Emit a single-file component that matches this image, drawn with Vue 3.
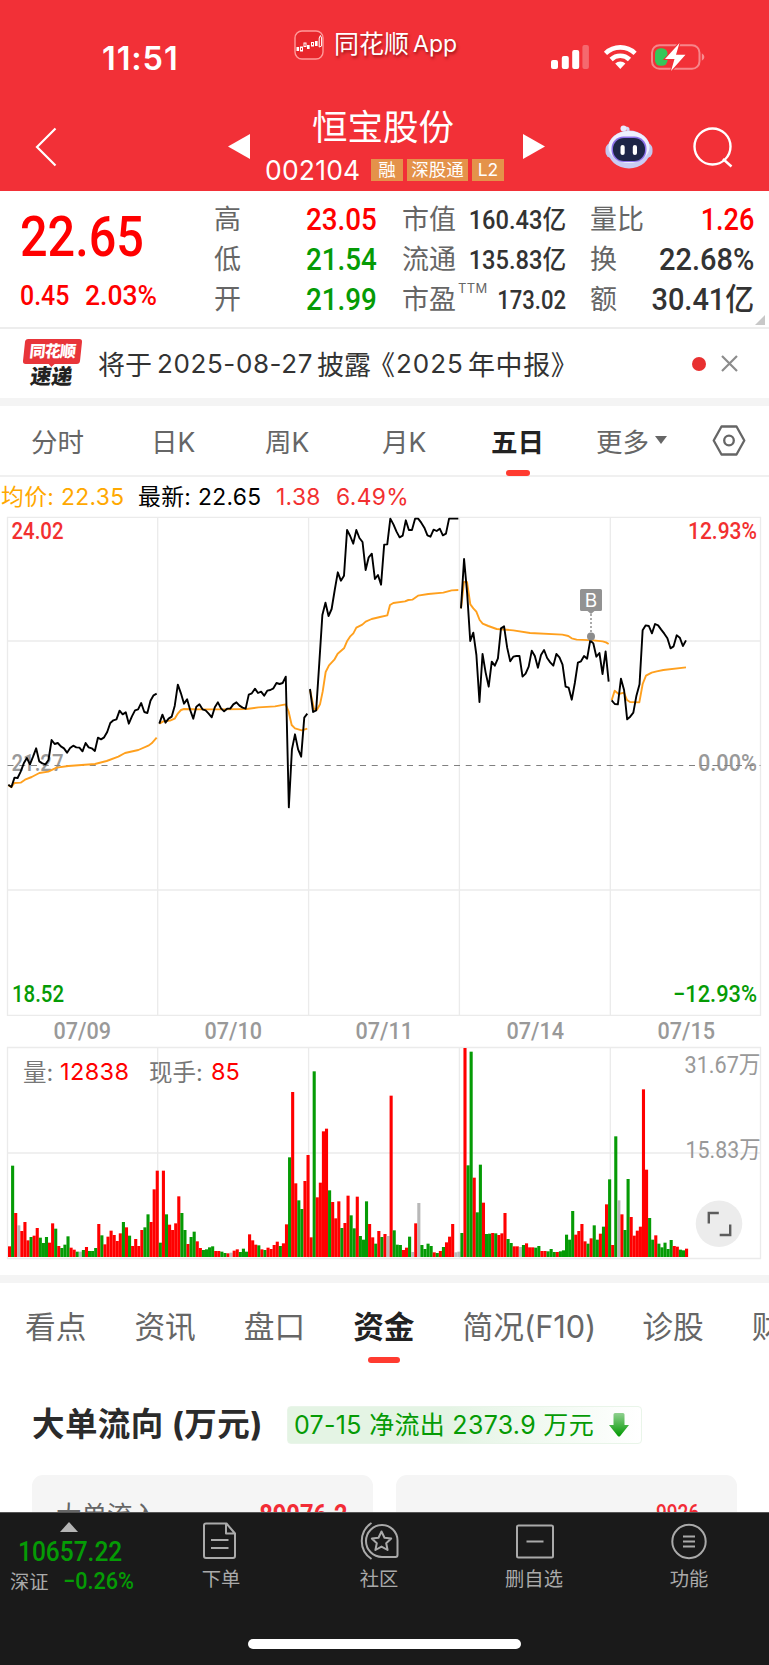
<script setup>
import { computed } from 'vue'

// left, middle and right quote columns
const quotes = [
  { label: '高', value: '23.05', tone: 'up' },
  { label: '低', value: '21.54', tone: 'down' },
  { label: '开', value: '21.99', tone: 'down' }
]
const caps = [
  { label: '市值', value: '160.43', unit: '亿' },
  { label: '流通', value: '135.83', unit: '亿' },
  { label: '市盈', sup: 'TTM', value: '173.02' }
]
const extras = [
  { label: '量比', value: '1.26', tone: 'up' },
  { label: '换', value: '22.68%' },
  { label: '额', value: '30.41', unit: '亿' }
]

const periods = ['分时', '日K', '周K', '月K', '五日', '更多']
const sections = ['看点', '资讯', '盘口', '资金', '简况(F10)', '诊股', '财']
const dates = ['07/09', '07/10', '07/11', '07/14', '07/15']

// one price per 5 minutes, chart units are a third of a pixel
const prices = [
  { x: 25, step: 9.27, y: [824, 831, 803, 804, 785, 760, 744, 763, 740, 715, 754, 760, 763, 750, 690, 702, 699, 709, 715, 728, 714, 707, 712, 713, 724, 699, 712, 715, 723, 683, 688, 682, 666, 639, 631, 628, 602, 613, 607, 641, 619, 601, 598, 579, 606, 609, 572, 556, 551] },
  { x: 478, step: 9.25, y: [641, 614, 638, 626, 620, 587, 524, 550, 581, 568, 600, 626, 590, 583, 598, 601, 611, 622, 592, 577, 595, 604, 596, 596, 583, 577, 587, 593, 596, 554, 550, 536, 549, 545, 557, 542, 540, 535, 519, 522, 519, 500, 892, 718, 673, 718, 740, 623, 611] },
  { x: 930, step: 9.27, y: [537, 606, 601, 460, 315, 278, 318, 297, 240, 187, 212, 197, 60, 78, 101, 60, 84, 96, 180, 142, 131, 207, 195, 224, 104, 103, 26, 43, 65, 82, 77, 31, 60, 60, 26, 26, 38, 53, 76, 80, 59, 63, 56, 76, 71, 26, 26, 26, 26] },
  { x: 1383, step: 9.23, y: [295, 147, 250, 393, 368, 435, 576, 432, 487, 530, 455, 467, 445, 355, 349, 413, 454, 440, 438, 438, 500, 491, 470, 422, 438, 473, 435, 420, 444, 457, 467, 432, 442, 464, 530, 533, 569, 519, 458, 454, 438, 446, 391, 400, 440, 429, 492, 424, 515] },
  { x: 1835, step: 9.29, y: [571, 582, 583, 506, 540, 628, 620, 608, 557, 523, 361, 346, 348, 370, 342, 346, 359, 371, 385, 415, 409, 376, 383, 408, 391] }
]

const averages = [
  '25,826 34,832 43,819 62,818 75,809 95,801 118,789 145,785 170,773 205,768 285,762 320,753 355,740 375,729 415,720 445,707 455,700 470,683',
  '478,641 490,634 510,632 524,626 534,610 543,600 552,597 600,598 660,598 740,597 775,592 825,589 857,583 866,605 875,645 885,655 905,661 922,656',
  '930,540 942,597 951,599 960,583 968,545 977,486 987,466 1003,449 1013,431 1032,415 1041,394 1050,380 1060,370 1069,353 1087,344 1097,335 1115,327 1140,321 1162,316 1170,285 1180,279 1215,274 1225,270 1237,269 1254,257 1285,252 1330,248 1355,241 1375,240',
  '1383,295 1392,216 1401,216 1411,283 1420,295 1429,305 1439,330 1448,341 1465,348 1490,357 1540,361 1590,369 1687,374 1705,378 1715,385 1730,389 1780,391 1808,394 1818,397 1826,402',
  '1835,571 1844,542 1856,552 1872,548 1881,570 1890,576 1918,577 1928,522 1938,497 1955,488 1970,484 1990,480 2058,472'
]

// r = up, g = down, w = flat, followed by the top edge of the bar
const volumes = `
r829 g587 r729 w766 r783 r756 r811 g801 r797 r774 g803 g819 g801 r818 r760 g776 r828 g834 g824 g799
r833 r839 g845 w845 g840 r831 g843 g843 g834 r762 g796 r823 r800 r782 r795 r813 r790 g756 r772 g797
r828 r807 r828 r780 g772 g733 r756 r658 r602
g818 r602 g733 r764 r780 r760 r679 g729 g780 r822 g801 g785 r814 r834 g840 g838 g832 g829 r843 r843
g845 g849 r850 w848 r842 r838 g846 g836 g845 r793 r811 r824 g826 r838 g840 r833 r837 r825 r815 g828
r820 r763 g562 r366 r640 g691 g717 r633 r555
r802 g304 r682 r638 r484 r476 g661 r696 r745 r694 g774 r759 r677 g736 g775 r680 g798 g809 g694 r762
r802 g821 r783 g801 r792 w798 r377 g781 g824 g825 r840 r833 g800 w846 r760 w699 g825 g837 g821 g828
r847 g849 r843 g831 r817 r800 r762 w847 w845
g789 r234 g586 g245 r623 g727 g584 r698 g792 g791 r789 g790 r795 r790 r729 g807 g819 r829 r829 w831
g825 r820 r832 r832 g833 g828 r843 r843 g844 g837 g846 r846 g844 g841 g794 g809 g723 r794 r783 r762
r814 g821 r805 g766 g809 r791 g770 r703 g628
r825 g499 w691 r733 g780 g627 r741 r797 r782 r770 r358 r599 g744 g809 r796 g821 g832 g818 g837 g810
r828 r830 g839 g841 r836`

const fills = { r: '#ff0000', g: '#059b05', w: '#b8b8b8' }

const pricePoints = computed(() =>
  prices.map(d => d.y.map((y, i) => `${(d.x + i * d.step).toFixed(1)},${y}`).join(' '))
)

const bars = computed(() =>
  volumes.trim().split(/\s+/).map((item, i) => {
    const top = Number(item.slice(1))
    return { x: 24 + i * 9.232, y: top, h: 861 - top, fill: fills[item[0]] }
  })
)
</script>

<template>
  <div class="app">
    <header class="header">
      <div class="status">
        <div class="time">11:51</div>
        <div class="brand">
          <svg class="brand-icon" viewBox="0 0 30 30">
            <rect x="1" y="1" width="28" height="28" rx="7" fill="#e8262c" stroke="#ff9a9a" stroke-width="1.4" />
            <g fill="#fff"><rect x="2.500" y="17" width="2.600" height="4" /><rect x="13" y="15" width="2.600" height="4" /><rect x="21" y="11" width="2.600" height="5" /></g>
            <g fill="none" stroke="#fff" stroke-width="1"><rect x="6.500" y="17" width="2" height="4" /><rect x="10" y="13" width="2" height="3.500" /><rect x="17.500" y="12.500" width="2" height="3.500" /><path d="M25.200 17V8l1.200-2.500L27.600 8v8z" /></g>
          </svg>
          <span>同花顺</span><span class="brand-latin">App</span>
        </div>
        <svg class="signals" width="156" height="30" viewBox="0 0 156 30">
          <g fill="#fff">
            <rect x="0" y="18" width="7" height="9" rx="2" />
            <rect x="10.8" y="14" width="7" height="13" rx="2" />
            <rect x="21.2" y="8" width="7" height="19" rx="2" />
            <rect x="31.4" y="3" width="6.500" height="24" rx="2" opacity=".28" />
          </g>
          <g fill="none" stroke="#fff" stroke-width="4.6">
            <path d="M54.5 11.3a21.500 21.500 0 0 1 29.600 0" />
            <path d="M60.100 17.500a13.300 13.300 0 0 1 18.400 0" />
          </g>
          <path d="M64.200 21.500a7.500 7.500 0 0 1 10.200 0L69.300 27z" fill="#fff" />
          <rect x="101" y="3.200" width="47.500" height="23.600" rx="7.500" fill="none" stroke="#fff" stroke-opacity=".42" stroke-width="2" />
          <path d="M150.800 11.200q2.600 1.500 2.600 3.800t-2.600 3.800z" fill="#fff" fill-opacity=".45" />
          <rect x="104" y="6.200" width="12.500" height="17.600" rx="5.500" fill="#35c759" />
          <path d="M128.500 1 114 17h9.500L120 29 134.500 12.700H125z" fill="#fff" stroke="#f23037" stroke-width="2" paint-order="stroke" />
        </svg>
      </div>

      <div class="nav">
        <svg class="back" width="22" height="40" viewBox="0 0 22 40"><path d="M20.500 1.500 2 20l18.500 18.500" fill="none" stroke="#fff" stroke-width="2.200" /></svg>
        <svg class="prev" width="22" height="25" viewBox="0 0 22 25"><path d="M0 12.500 22 0v25z" fill="#fff" /></svg>
        <div class="stock">
          <div class="stock-name">恒宝股份</div>
          <div class="stock-meta">
            <span class="code">002104</span>
            <span class="tag">融</span>
            <span class="tag wide">深股通</span>
            <span class="tag">L2</span>
          </div>
        </div>
        <svg class="next" width="22" height="25" viewBox="0 0 22 25"><path d="M22 12.500 0 0v25z" fill="#fff" /></svg>
        <svg class="robot" width="48" height="44" viewBox="0 0 48 44">
          <path d="M23 7V4q0-1-2.500-1" fill="none" stroke="#d6d9f5" stroke-width="3" />
          <circle cx="18.500" cy="3.500" r="3" fill="#e9ebff" />
          <rect x="0.500" y="18" width="47" height="15" rx="6" fill="#c3c7ee" />
          <ellipse cx="24" cy="24.500" rx="21.500" ry="19" fill="#c9ccf3" />
          <ellipse cx="24" cy="22" rx="20.500" ry="16" fill="#eef0ff" />
          <rect x="6.500" y="11.500" width="35" height="25.500" rx="12" fill="#8d72ea" />
          <rect x="8" y="13" width="32" height="23" rx="11" fill="#1d2547" />
          <rect x="15.500" y="20" width="4.200" height="10" rx="2.100" fill="#fff" />
          <rect x="27.800" y="20" width="4.200" height="10" rx="2.100" fill="#fff" />
        </svg>
        <svg class="search" width="42" height="42" viewBox="0 0 42 42"><g fill="none" stroke="#fff" stroke-width="2.400"><circle cx="20.500" cy="20.500" r="18" /><path d="m31 33 8.500 7.500" /></g></svg>
      </div>
    </header>

    <section class="summary">
      <div class="last up">
        <div class="last-price din">22.65</div>
        <div class="last-change"><span class="din">0.45</span><span class="din">2.03%</span></div>
      </div>
      <div class="col quotes">
        <div v-for="q in quotes" :key="q.label" class="pair">
          <span class="label">{{ q.label }}</span>
          <span class="din right" :class="q.tone">{{ q.value }}</span>
        </div>
      </div>
      <div class="col caps">
        <div v-for="c in caps" :key="c.label" class="pair">
          <span class="label">{{ c.label }}<sup v-if="c.sup">{{ c.sup }}</sup></span>
          <span class="din right">{{ c.value }}<b v-if="c.unit">{{ c.unit }}</b></span>
        </div>
      </div>
      <div class="col extras">
        <div v-for="e in extras" :key="e.label" class="pair">
          <span class="label">{{ e.label }}</span>
          <span class="din right" :class="e.tone">{{ e.value }}<b v-if="e.unit">{{ e.unit }}</b></span>
        </div>
      </div>
      <svg class="corner" width="10" height="10" viewBox="0 0 10 10"><path d="M10 0v10H0z" fill="#c8c8c8" /></svg>
    </section>

    <section class="news">
      <div class="express">
        <div class="express-top"><span>同花顺</span></div>
        <div class="express-bottom">速递</div>
      </div>
      <div class="headline">
        <span>将于</span><span class="num date">2025-08-27</span><span>披露</span><span class="open">《</span><span class="num year">2025</span><span class="report">年中报》</span>
      </div>
      <i class="dot"></i>
      <svg class="dismiss" width="17" height="17" viewBox="0 0 17 17"><path d="m1 1 15 15M16 1 1 16" stroke="#8c8c8c" stroke-width="2.200" /></svg>
    </section>

    <nav class="periods">
      <div v-for="(p, i) in periods" :key="p" class="period" :class="['p' + i, { active: p === '五日' }]">
        {{ p }}<svg v-if="p === '更多'" width="12" height="8" viewBox="0 0 12 8"><path d="M0 0h12L6 8z" fill="#666" /></svg>
      </div>
      <svg class="setting" width="34" height="31" viewBox="0 0 34 31"><g fill="none" stroke="#666" stroke-width="2.300"><path d="M9.500 1.500h15l7.800 14-7.800 14h-15l-7.800-14z" stroke-linejoin="round" /><circle cx="17" cy="15.500" r="4.800" /></g></svg>
    </nav>

    <div class="legend">
      <span class="avg">均价: 22.35</span>
      <span class="latest">最新: 22.65</span>
      <span class="diff">1.38</span>
      <span class="diff">6.49%</span>
    </div>

    <svg class="chart" width="769" height="765" viewBox="0 0 769 765">
      <g fill="none" stroke="#ebebeb" stroke-width="1.300">
        <path d="M7.500 7.300h753v498H7.500zM7.500 131h753M7.500 380h753" />
        <path d="M157.700 7v498M308.600 7v498M459.400 7v498M610.300 7v498" />
        <path d="M7.500 537.500h753v211H7.500zM7.500 643h753M157.700 537v211M308.600 537v211M459.400 537v211M610.300 537v211" />
      </g>
      <g class="price-labels">
        <text x="11.500" y="29" textLength="52" lengthAdjust="spacingAndGlyphs" fill="#f23030">24.02</text>
        <text x="688" y="29" textLength="69" lengthAdjust="spacingAndGlyphs" fill="#f23030">12.93%</text>
        <text x="11.500" y="260.500" textLength="52" lengthAdjust="spacingAndGlyphs" class="mid">21.27</text>
        <text x="698" y="260.500" textLength="59" lengthAdjust="spacingAndGlyphs" class="mid">0.00%</text>
        <text x="12" y="491.500" textLength="52" lengthAdjust="spacingAndGlyphs" fill="#059b05">18.52</text>
        <text x="673" y="491.500" textLength="84" lengthAdjust="spacingAndGlyphs" fill="#059b05">−12.93%</text>
        <text v-for="(d, i) in dates" :key="d" :x="53.500 + i * 151" y="529" textLength="57.500" lengthAdjust="spacingAndGlyphs" class="mid">{{ d }}</text>
      </g>
      <path d="M7.500 255.500h753" stroke="#808080" stroke-width="1.200" stroke-dasharray="6 5.750" />

      <g transform="scale(.333333)" fill="none" stroke-width="5.700" stroke-linejoin="round">
        <polyline v-for="(a, i) in averages" :key="'a' + i" :points="a" stroke="#ffa01e" />
        <polyline v-for="(p, i) in pricePoints" :key="'p' + i" :points="p" stroke="#000" />
      </g>

      <!-- buy marker -->
      <path d="M591 92v30" stroke="#8f8f8f" stroke-width="1.500" stroke-dasharray="2 2" />
      <circle cx="591" cy="126.500" r="4" fill="#8c8c8c" />
      <path d="M580 80.500q0-1.500 1.500-1.500h19q1.500 0 1.500 1.500v19q0 1.500-1.500 1.500h-6l-3.500 3-3.500-3h-6q-1.500 0-1.500-1.500z" fill="#929292" />
      <text x="591" y="97" class="marker">B</text>

      <g transform="translate(0 460) scale(.333333)">
        <rect v-for="(b, i) in bars" :key="i" :x="b.x" :y="b.y" :width="9.300" :height="b.h" :fill="b.fill" />
      </g>
      <g class="volume-labels">
        <text x="23" y="571" fill="#777">量:</text>
        <text x="60" y="570" fill="#ff0000" textLength="69">12838</text>
        <text x="149" y="571" fill="#777">现手:</text>
        <text x="211" y="570" fill="#ff0000">85</text>
      </g>
      <g class="scale-labels">
        <text x="684.500" y="563" textLength="76" lengthAdjust="spacingAndGlyphs">31.67万</text>
        <text x="685.500" y="647.500" textLength="75" lengthAdjust="spacingAndGlyphs">15.83万</text>
      </g>
      <circle cx="719" cy="713.700" r="23.300" fill="#ececec" />
      <path d="M708.800 713.500v-10.500h10M730.200 714.500v10.500h-10.500" fill="none" stroke="#5c5c5c" stroke-width="2.400" />
    </svg>

    <nav class="sections">
      <div v-for="s in sections" :key="s" class="section-tab" :class="{ active: s === '资金' }">{{ s }}</div>
    </nav>

    <section class="flow">
      <div class="flow-head">
        <h2>大单流向 <span>(万元)</span></h2>
        <div class="flow-badge">
          07-15 净流出 2373.9 万元
          <svg width="20" height="24" viewBox="0 0 20 24">
            <defs><linearGradient id="arrow" x1="0" y1="0" x2="0" y2="1"><stop offset="0" stop-color="#8fd08f" /><stop offset="1" stop-color="#009900" /></linearGradient></defs>
            <path d="M4.500 1.500q0-1.500 1.500-1.500h8q1.500 0 1.500 1.500V12H20L11.200 23q-1.200 1.200-2.400 0L0 12h4.500z" fill="url(#arrow)" />
          </svg>
        </div>
      </div>
      <div class="flow-cards">
        <div class="card"><span class="card-label">大单流入</span><span class="card-value din right">89076.2</span></div>
        <div class="card"><span></span><span class="card-value small din right">9926</span></div>
      </div>
    </section>

    <footer class="footer">
      <div class="toolbar">
        <div class="index">
          <svg width="18" height="10" viewBox="0 0 18 10"><path d="M9 0l9 10H0z" fill="#b5b5b5" /></svg>
          <div class="index-value din">10657.22</div>
          <div class="index-row"><span>深证</span><span class="din">−0.26%</span></div>
        </div>
        <div class="tool t0">
          <svg width="40" height="40" viewBox="0 0 40 40"><path d="M5.500 2.500h20l8.500 10V35q0 2-2 2H5q-2 0-2-2V4.500q0-2 2-2zM25 3v9.500h9M10 19h17.500M10 27h17.500" /></svg>
          <span>下单</span>
        </div>
        <div class="tool t1">
          <svg width="40" height="40" viewBox="0 0 40 40"><path d="M12.500 2A21.500 21.500 0 0 0 12.500 38M23 4A15.500 15.500 0 0 0 23 36h13.500q2 0 2-2V19.500A15.500 15.500 0 0 0 23 4z" /><path d="m22.500 10.500 3 6.300 6.700.8-5 4.600 1.400 6.800-6.100-3.400-6.100 3.400 1.400-6.800-5-4.600 6.700-.8z" /></svg>
          <span>社区</span>
        </div>
        <div class="tool t2">
          <svg width="40" height="40" viewBox="0 0 40 40"><path d="M4.500 4.500h33q1.500 0 1.500 1.500v29q0 1.500-1.500 1.500h-33Q3 36.500 3 35V6q0-1.500 1.500-1.500zM12.500 20.500h17" /></svg>
          <span>删自选</span>
        </div>
        <div class="tool t3">
          <svg width="40" height="40" viewBox="0 0 40 40"><circle cx="20" cy="20.500" r="16.700" /><path d="M14 15.500h12M14 20.500h12M14 25.500h12" /></svg>
          <span>功能</span>
        </div>
      </div>
      <div class="home-bar"></div>
    </footer>
  </div>
</template>

<style>
body {
  background: #fff;
}
</style>

<style scoped>
.app {
  width: 769px;
  height: 1665px;
  display: flex;
  flex-direction: column;
  overflow: hidden;
  background: #fff;
  color: #333;
  font-family: Inter, "Noto Sans CJK SC", sans-serif;
}

.app > * {
  flex-shrink: 0;
}

svg {
  display: block;
  flex-shrink: 0;
}

.din {
  display: inline-block;
  font-family: Roboto, "Noto Sans CJK SC", sans-serif;
  font-weight: 500;
  white-space: nowrap;
  transform: scaleX(0.91);
  transform-origin: left center;
}

.din.right {
  transform-origin: right center;
}

.up {
  color: #ff0000;
}

.down {
  color: #059b05;
}

/* header */
.header {
  height: 191px;
  background: #f23037;
  color: #fff;
}

.status {
  height: 90px;
  display: flex;
  align-items: flex-start;
}

.time {
  width: 193px;
  padding: 39px 0 0 102px;
  box-sizing: border-box;
  margin-right: 101px;
  font-size: 32.500px;
  line-height: 40px;
  font-weight: 600;
  letter-spacing: 0.9px;
}

.brand {
  display: flex;
  align-items: center;
  width: 257px;
  margin-top: 29px;
  height: 31px;
  font-size: 25px;
  line-height: 31px;
  text-shadow: 1px 2px 3px rgba(90, 0, 0, 0.6);
}

.brand-icon {
  width: 30px;
  height: 30px;
  margin-right: 10px;
}

.brand-latin {
  margin-left: 4px;
  font-size: 23px;
}

.signals {
  margin-top: 42px;
}

.nav {
  height: 101px;
  display: flex;
  align-items: flex-start;
}

.back {
  margin: 37px 0 0 35px;
}

.prev {
  margin: 44px 0 0 171px;
}

.stock {
  width: 273px;
  padding-top: 16px;
}

.stock-name {
  padding-left: 62px;
  font-size: 35.500px;
  line-height: 44px;
  font-weight: 400;
}

.stock-meta {
  display: flex;
  align-items: center;
  padding-left: 15px;
  height: 40px;
  white-space: nowrap;
}

.code {
  width: 106px;
  font-size: 26.500px;
  font-weight: 400;
  letter-spacing: 0.2px;
}

.tag {
  width: 32px;
  height: 22px;
  margin-right: 4px;
  background: #e4924a;
  font-size: 17.500px;
  line-height: 22px;
  text-align: center;
}

.tag.wide {
  width: 61px;
}

.next {
  margin-top: 44px;
}

.robot {
  margin: 35px 0 0 60px;
}

.search {
  margin: 36px 0 0 39px;
}

/* quote summary */
.summary {
  height: 138px;
  display: flex;
  align-items: flex-start;
  box-sizing: border-box;
  border-bottom: 2px solid #ededed;
}

.last {
  width: 214px;
  padding-left: 20px;
  box-sizing: border-box;
}

.last-price {
  display: block;
  margin-top: 14px;
  font-size: 55.500px;
  line-height: 66px;
  transform: scaleX(0.875);
}

.last-change {
  display: flex;
  gap: 8px;
  margin-top: 8px;
  font-size: 28px;
  line-height: 34px;
}

.last-change .din {
  width: 57px;
  transform: scaleX(0.89);
}

.last-change .din:last-child {
  transform: scaleX(0.945);
}

.col {
  padding-top: 9px;
}

.pair {
  height: 40px;
  display: flex;
  justify-content: space-between;
  align-items: center;
  font-size: 30.500px;
  line-height: 40px;
}

.label {
  color: #666;
  font-size: 27px;
  white-space: nowrap;
}

.label sup {
  margin-left: 2px;
  font-size: 13px;
  line-height: 0;
  vertical-align: 16px;
  letter-spacing: 0.3px;
}

.pair b {
  font-weight: 500;
  font-size: 1em;
}

.quotes {
  width: 163px;
}

.caps {
  width: 164px;
  margin-left: 25px;
}

.caps .pair {
  font-size: 26px;
}

.caps .din {
  margin-left: -20px;
}

.caps .pair:last-child .din {
  transform: scaleX(0.85);
}

.extras {
  width: 164px;
  margin-left: 24px;
}

.extras .din {
  transform: scaleX(0.95);
}

.extras .up {
  transform: scaleX(0.89);
}

.corner {
  margin: 124px 0 0 1px;
}

/* news strip */
.news {
  height: 69px;
  display: flex;
  align-items: center;
  border-bottom: 8px solid #f4f4f4;
}

.express {
  width: 57px;
  margin-left: 24px;
}

.express-top {
  height: 25px;
  background: #e8353a;
  border-radius: 3px;
  transform: skewX(-6deg);
  color: #fff;
  font-size: 16px;
  line-height: 24px;
  font-weight: 900;
  text-align: center;
  letter-spacing: -0.8px;
}

.express-top::after {
  content: '';
  display: block;
  width: 0;
  margin: 0 auto;
  border: 4px solid transparent;
  border-top-color: #e8353a;
}

.express-bottom {
  padding-right: 2px;
  font-size: 21px;
  line-height: 25px;
  font-weight: 900;
  text-align: center;
  color: #222;
  transform: skewX(-8deg);
}

.headline {
  display: flex;
  align-items: center;
  width: 594px;
  margin-left: 17px;
  padding-bottom: 1px;
  font-size: 27px;
  white-space: nowrap;
}

.num {
  font-size: 26px;
  margin: 0 3px 0 5px;
}

.date {
  width: 157px;
  letter-spacing: 0.6px;
}

.open {
  margin-left: -3px;
}

.year {
  width: 67px;
  margin-left: 1px;
  margin-right: 5px;
  letter-spacing: 1px;
}

.report {
  letter-spacing: 0.6px;
}

.dot {
  width: 14px;
  height: 14px;
  border-radius: 50%;
  background: #e83030;
}

.dismiss {
  margin-left: 15px;
}

/* period tabs */
.periods {
  height: 71px;
  display: flex;
  align-items: center;
  box-sizing: border-box;
  border-bottom: 2px solid #f0f0f0;
  color: #666;
  font-size: 26.500px;
}

.period {
  display: flex;
  align-items: center;
  gap: 6px;
  height: 70px;
  padding-bottom: 1px;
  box-sizing: border-box;
  white-space: nowrap;
}

.p0 {
  width: 120px;
  margin-left: 31px;
}

.p1 {
  width: 114px;
}

.p2 {
  width: 117px;
}

.p3 {
  width: 109px;
}

.p4 {
  width: 53px;
  margin-right: 52px;
}

.p5 {
  width: 116px;
}

.period.active {
  flex-direction: column;
  justify-content: flex-end;
  gap: 8px;
  padding-bottom: 0;
  color: #222;
  font-weight: 700;
  line-height: 40px;
}

.active::after {
  content: '';
  width: 24px;
  height: 6px;
  border-radius: 3px;
  background: #ff3b30;
}

.legend {
  height: 33px;
  display: flex;
  align-items: center;
  padding: 6px 0 0 1px;
  box-sizing: border-box;
  font-size: 22.800px;
  line-height: 27px;
  letter-spacing: 0.35px;
  white-space: nowrap;
}

.avg {
  width: 137px;
  color: #ffa800;
}

.latest {
  width: 138px;
  color: #000;
}

.diff {
  width: 60px;
  color: #f23030;
}

/* charts */
.price-labels,
.scale-labels {
  font-family: Roboto, "Noto Sans CJK SC", sans-serif;
  font-size: 24px;
  font-weight: 500;
}

.mid {
  fill: #999;
}

.scale-labels {
  fill: #999;
  font-weight: 400;
}

.volume-labels {
  font-size: 23.500px;
}

.marker {
  fill: #fff;
  font-size: 19px;
  text-anchor: middle;
}

/* section tabs */
.sections {
  height: 88px;
  display: flex;
  gap: 48px;
  padding-left: 25px;
  border-top: 8px solid #f4f4f4;
  color: #666;
  font-size: 30.700px;
  line-height: 44px;
  white-space: nowrap;
}

.section-tab {
  padding-top: 22px;
}

.section-tab:nth-child(5) {
  margin-right: -2px;
}

.section-tab.active {
  display: flex;
  flex-direction: column;
  align-items: center;
  gap: 8px;
  color: #222;
  font-weight: 700;
}

.section-tab.active::after {
  width: 32px;
}

/* money flow */
.flow {
  height: 141px;
  overflow: hidden;
}

.flow-head {
  display: flex;
  align-items: center;
  padding: 35px 0 31px 32px;
}

h2 {
  width: 255px;
  margin: 0;
  color: #2b2b2b;
  font-size: 32.500px;
  line-height: 38px;
  font-weight: 700;
  letter-spacing: 0.4px;
  white-space: nowrap;
}

.flow-badge {
  width: 355px;
  height: 38px;
  display: flex;
  align-items: center;
  justify-content: space-between;
  box-sizing: border-box;
  padding: 0 12px 4px 6px;
  border: 1px solid #e9f5e9;
  border-radius: 4px;
  background: linear-gradient(90deg, #e4f4e4 45%, #fff);
  color: #059b05;
  font-size: 25px;
  letter-spacing: 0.3px;
  white-space: nowrap;
}

.flow-badge svg {
  margin-top: 4px;
}

.flow-cards {
  display: flex;
  gap: 23px;
  padding-left: 32px;
}

.card {
  width: 341px;
  height: 90px;
  display: flex;
  justify-content: space-between;
  box-sizing: border-box;
  padding: 20px 25px 0 24px;
  border-radius: 11px;
  background: #f5f5f5;
  line-height: 40px;
}

.card-label {
  color: #666;
  font-size: 25.500px;
}

.card-value {
  color: #f22c35;
  font-size: 28px;
  font-weight: 700;
  transform: scaleX(0.845);
}

.card-value.small {
  margin-right: 13px;
  font-size: 23px;
  line-height: 38px;
  font-weight: 500;
  transform: scaleX(0.83);
}

/* bottom bar */
.footer {
  height: 152px;
  border-top: 1px solid #555;
  background: #1a1a1a;
  color: #aaa;
}

.toolbar {
  height: 126px;
  display: flex;
  font-size: 19.300px;
}

.index {
  width: 181px;
  color: #059b05;
}

.index svg {
  margin: 9px 0 0 60px;
}

.index-value {
  display: block;
  margin: 3px 0 0 18px;
  font-size: 28px;
  line-height: 34px;
  font-weight: 500;
  transform: scaleX(0.875);
}

.index-row {
  display: flex;
  align-items: center;
  gap: 14px;
  margin: 0 0 0 10px;
  line-height: 26px;
}

.index-row span:first-child {
  color: #aaa;
}

.index-row .din {
  font-size: 23px;
  transform: scaleX(0.94);
}

.tool {
  width: 80px;
  display: flex;
  flex-direction: column;
  align-items: center;
  gap: 4px;
  padding-top: 8px;
  line-height: 28px;
}

.tool svg {
  fill: none;
  stroke: #aaa;
  stroke-width: 2;
  stroke-linejoin: round;
}

.t1 {
  margin-left: 78px;
}

.t2 {
  margin-left: 75px;
}

.t3 {
  margin-left: 75px;
}

.home-bar {
  width: 273px;
  height: 10px;
  margin: 0 0 0 248px;
  border-radius: 5px;
  background: #fff;
}
</style>
